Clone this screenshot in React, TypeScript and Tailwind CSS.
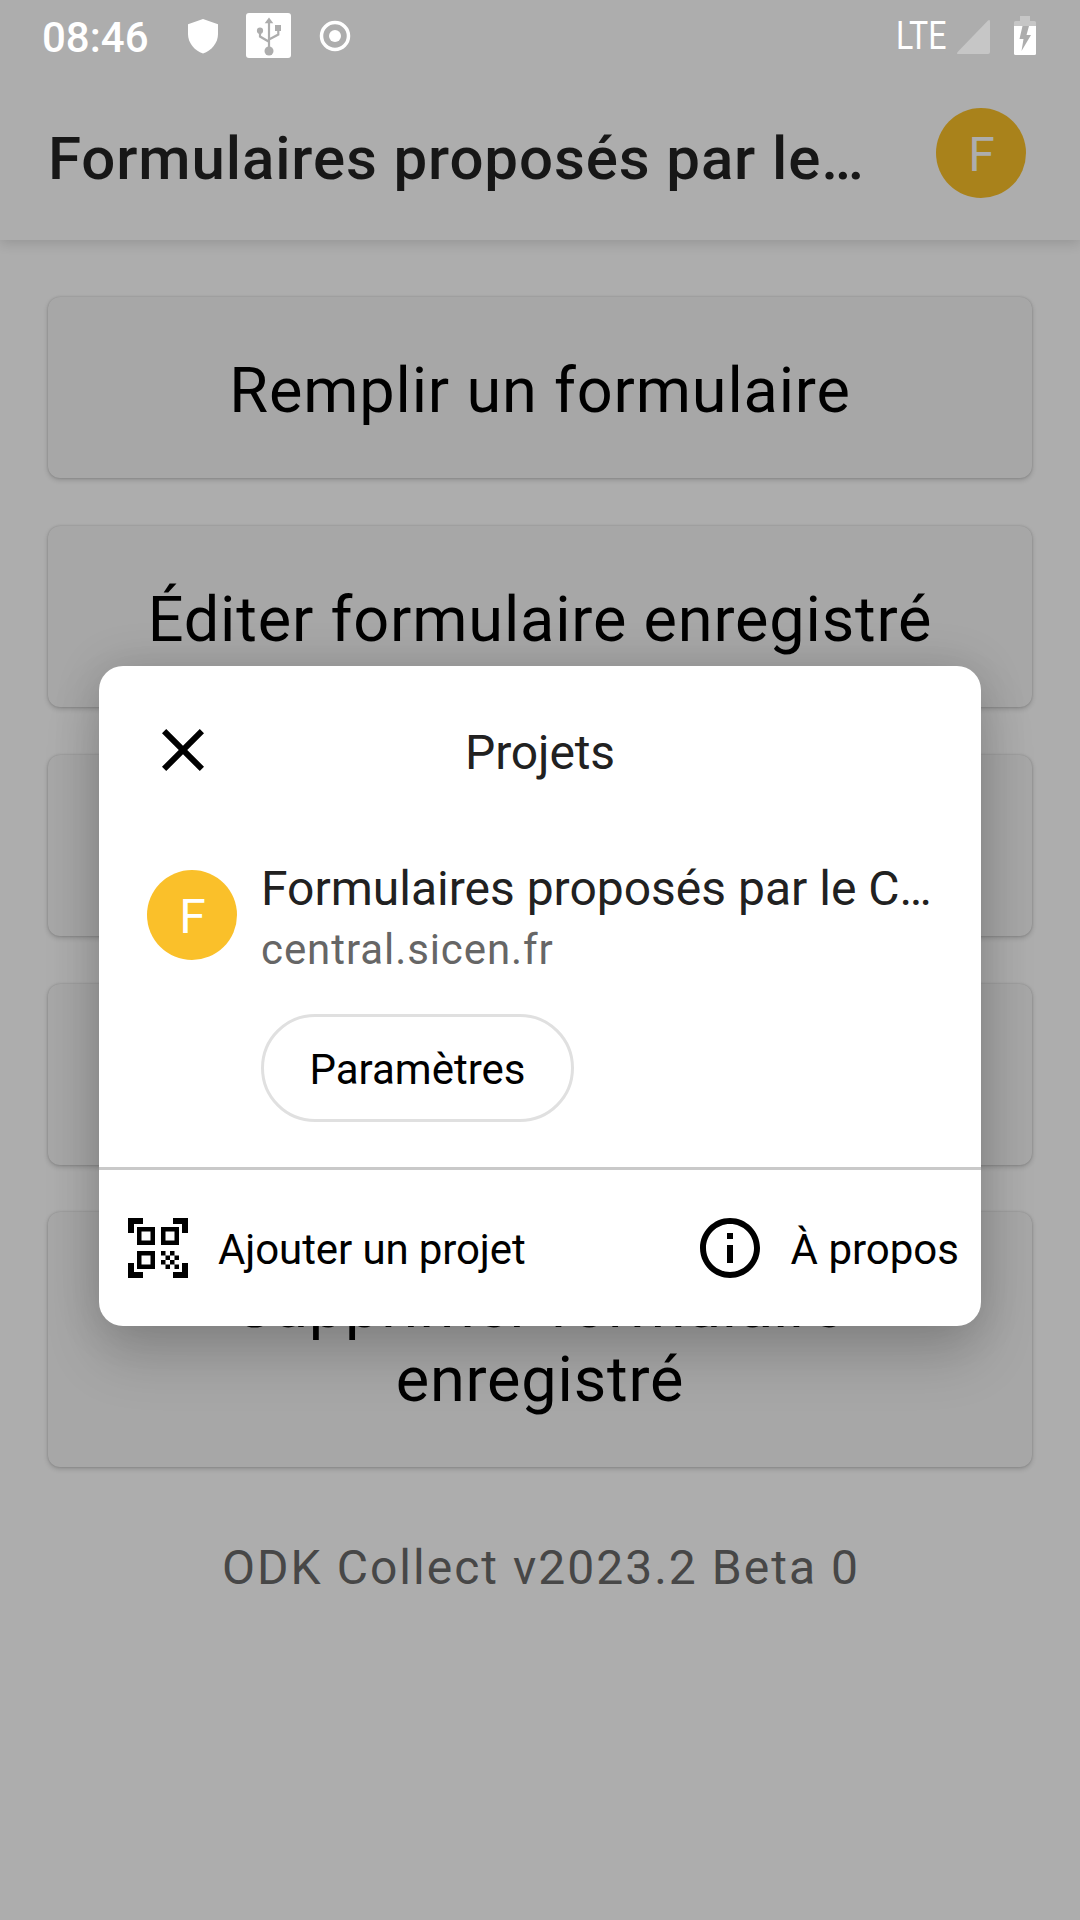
import React from "react";

const ROBOTO = "font-['Roboto',sans-serif]";

function StatusBar() {
  return (
    <div className="flex h-[72px] items-start text-white">
      <span className="ml-[42px] mt-[12px] w-[108px] whitespace-nowrap text-[42px] font-medium leading-[51px]">08:46</span>
      <svg className="ml-[37px] mt-[18px] h-[36px] w-[32px]" viewBox="0 0 32 36">
        <path d="M16 1 L31 6.2 V16 C31 25 24.500 32.500 16 35.500 C7.500 32.500 1 25 1 16 V6.200 Z" fill="#fff" />
      </svg>
      <svg className="ml-[27px] mt-[13px] h-[45px] w-[45px]" viewBox="0 0 45 45">
        <rect width="45" height="45" rx="3" fill="#fff" />
        <g fill="#adadad" stroke="none">
          <path d="M23 4.500 L27.300 10.200 H18.700 Z" />
          <circle cx="23" cy="38" r="4.500" />
          <circle cx="14" cy="17.700" r="3.100" />
          <rect x="29" y="12" width="6" height="6" />
        </g>
        <path d="M23 9 V36 M14 18 V23.500 L23 28.800 M32.300 17 V21.500 L23 26.500" fill="none" stroke="#adadad" strokeWidth="2.200" />
      </svg>
      <svg className="ml-[28px] mt-[20px] h-[32px] w-[32px]" viewBox="0 0 32 32">
        <circle cx="16" cy="16" r="13.500" fill="none" stroke="#fff" strokeWidth="3.500" />
        <circle cx="16" cy="16" r="6" fill="#fff" />
      </svg>
      <span className="ml-[545px] mt-[14px] w-[55px] origin-left scale-x-[0.845] whitespace-nowrap text-[38px] leading-[44px]">LTE</span>
      <svg className="ml-[5px] mt-[19px] h-[36px] w-[35px]" viewBox="0 0 35 36">
        <path d="M2.500 35 H32 Q34 35 34 33 V2.500 Q34 0 32 1.600 L1.600 33 Q0 35 2.500 35 Z" fill="#c6c6c6" />
      </svg>
      <svg className="ml-[23px] mt-[16px] h-[39px] w-[22px]" viewBox="0 0 22 39">
        <path d="M6 0 H16 V5 H20.500 Q22 5 22 6.500 V10 H0 V6.500 Q0 5 1.500 5 H6 Z" fill="#c6c6c6" />
        <path d="M0 10 H22 V37.500 Q22 39 20.500 39 H1.500 Q0 39 0 37.500 Z" fill="#fff" />
        <path d="M8.500 10 H15 L12.500 19 H17 L7.500 35 L9.500 23 H5.500 Z" fill="#adadad" />
      </svg>
    </div>
  );
}

function Header() {
  return (
    <header className="h-[240px] bg-[#adadad] shadow-[0_3px_12px_rgba(0,0,0,0.14)]">
      <StatusBar />
      <div className="flex h-[168px] items-start justify-between pl-[48px] pr-[54px]">
        <h1 className="mt-[52px] whitespace-nowrap text-[60px] font-medium leading-[70px] tracking-[0.0148em] text-[#171717]">
          Formulaires proposés par le…
        </h1>
        <div className="mt-[36px] flex size-[90px] items-center justify-center rounded-full bg-[#a9821b] text-[48px] leading-[56px] text-[#adadad]">
          <span className="ml-px mt-[3px]">F</span>
        </div>
      </div>
    </header>
  );
}

function MenuCard({ children }: { children?: React.ReactNode }) {
  return (
    <div className="min-h-[181px] rounded-[12px] bg-[#a7a7a7] px-[96px] pb-[50px] pt-[57px] text-center text-[63px] leading-[74px] tracking-[0.0132em] text-black shadow-[0_2px_5px_rgba(0,0,0,0.18),0_0_2px_rgba(0,0,0,0.18)]">
      {children}
    </div>
  );
}

function ProjectsDialog() {
  return (
    <div className="absolute left-[99px] top-[666px] flex h-[660px] w-[882px] flex-col rounded-[24px] bg-white shadow-[0_32px_56px_rgba(0,0,0,0.16),0_0_48px_rgba(0,0,0,0.14)]">
      <div className="grid grid-cols-[72px_1fr_72px] px-[48px] pt-[48px]">
        <svg className="size-[72px]" viewBox="0 0 24 24">
          <path d="M19 6.410 17.590 5 12 10.590 6.410 5 5 6.410 10.590 12 5 17.590 6.410 19 12 13.410 17.590 19 19 17.590 13.410 12z" />
        </svg>
        <h2 className="mt-[11px] text-center text-[48px] leading-[56px] tracking-[-0.003em] text-[#212121]">Projets</h2>
      </div>
      <div className="flex pl-[48px] pt-[74px]">
        <div className="mt-[10px] flex size-[90px] shrink-0 items-center justify-center rounded-full bg-[#fac02a] text-[48px] leading-[56px] text-white">
          <span className="ml-px mt-[3px]">F</span>
        </div>
        <div className="ml-[24px] flex flex-col items-start">
          <div className="mt-px whitespace-nowrap text-[48px] leading-[56px] text-[#212121]">
            Formulaires proposés par le C…
          </div>
          <div className="mt-[8px] whitespace-nowrap text-[42px] leading-[50px] tracking-[0.022em] text-[#666]">central.sicen.fr</div>
          <button className="mt-[39px] h-[108px] w-[313px] rounded-full border-[3px] border-[#e0e0e0] pt-[4px] text-center text-[42px] leading-[50px] text-black">
            Paramètres
          </button>
        </div>
      </div>
      <div className="mt-auto flex h-[159px] items-start justify-between border-t-[3px] border-[#c9c9c9] pl-[23px] pr-[22px] pt-[42px] text-[42px] text-black">
        <div className="flex items-center">
          <svg className="size-[72px]" viewBox="0 0 24 24">
            <path d="M9.500 6.500v3h-3v-3h3M11 5H5v6h6V5zm-1.500 9.500v3h-3v-3h3M11 13H5v6h6v-6zm6.500-6.500v3h-3v-3h3M19 5h-6v6h6V5zm-6 8h1.500v1.500H13V13zm1.500 1.500H16V16h-1.500v-1.500zM16 13h1.500v1.500H16V13zm-3 3h1.500v1.500H13V16zm1.500 1.500H16V19h-1.500v-1.500zM16 16h1.500v1.500H16V16zm1.500-1.500H19V16h-1.500v-1.500zm0 3H19V19h-1.500v-1.500zM22 7h-2V4h-3V2h5v5zm0 15v-5h-2v3h-3v2h5zM2 22h5v-2H4v-3H2v5zM2 2v5h2V4h3V2H2z" />
          </svg>
          <span className="ml-[24px] mt-[3px] leading-[50px] tracking-[-0.0025em]">Ajouter un projet</span>
        </div>
        <div className="flex items-center">
          <svg className="size-[72px]" viewBox="0 0 24 24">
            <path d="M11 7h2v2h-2zm0 4h2v6h-2zm1-9C6.480 2 2 6.480 2 12s4.480 10 10 10 10-4.480 10-10S17.520 2 12 2zm0 18c-4.410 0-8-3.590-8-8s3.590-8 8-8 8 3.590 8 8-3.590 8-8 8z" />
          </svg>
          <span className="ml-[25px] mt-[3px] leading-[50px]">À propos</span>
        </div>
      </div>
    </div>
  );
}

export default function App() {
  return (
    <div className={`relative h-[1920px] w-[1080px] overflow-hidden bg-[#adadad] ${ROBOTO}`}>
      <Header />
      <main className="flex flex-col px-[48px] pt-[57px]">
        <div className="grid gap-[48px]">
          <MenuCard>Remplir un formulaire</MenuCard>
          <MenuCard>Éditer formulaire enregistré</MenuCard>
          <MenuCard />
          <MenuCard />
        </div>
        <div className="mt-[47px]">
          <MenuCard>Supprimer formulaire enregistré</MenuCard>
        </div>
        <p className="mt-[73px] pl-[2px] text-center text-[48px] leading-[56px] tracking-[0.042em] text-[#474747]">ODK Collect v2023.2 Beta 0</p>
      </main>
      <ProjectsDialog />
    </div>
  );
}
